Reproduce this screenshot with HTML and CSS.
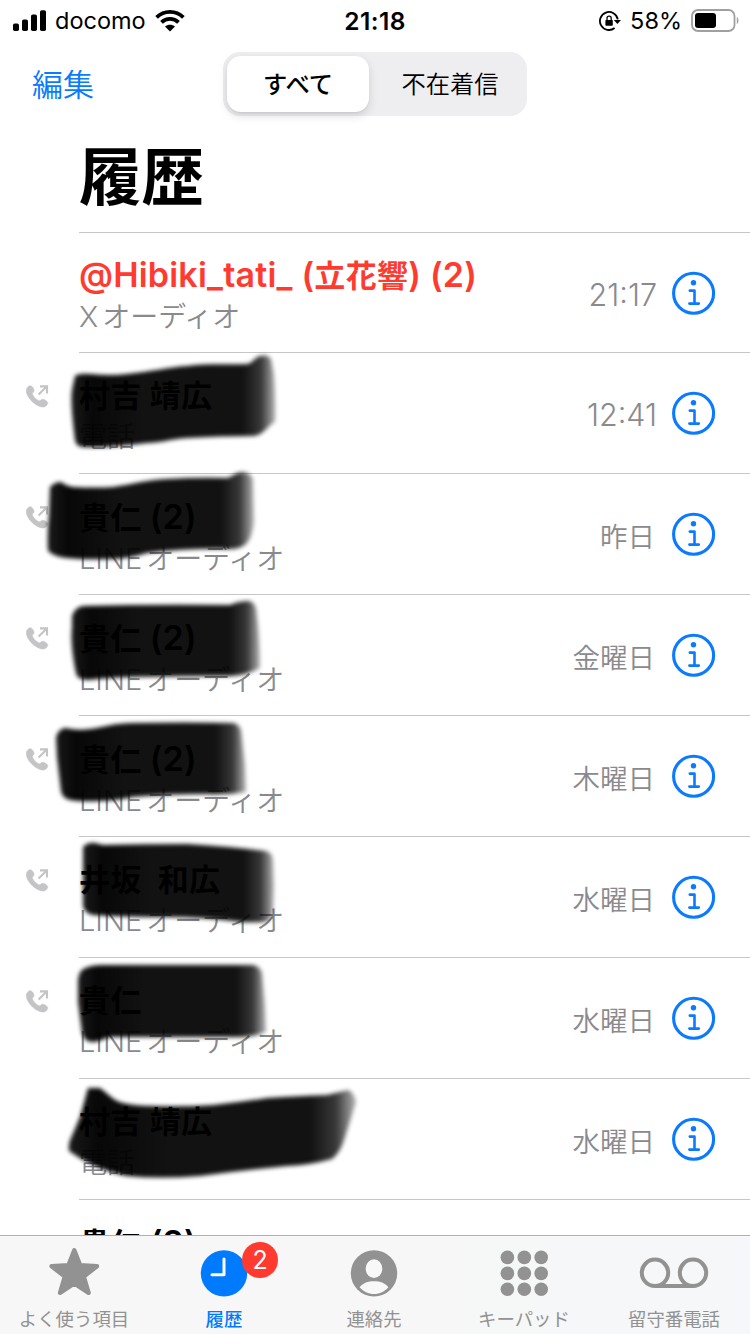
FILE: index.html
```html
<!DOCTYPE html>
<html lang="ja">

<head>
    <meta charset="UTF-8">
    <meta name="viewport" content="width=device-width, initial-scale=1.0">
    <title>履歴</title>
    <link rel="stylesheet" href="styles.css">
</head>

<body>
    <!-- shared icons and gradients -->
    <svg class="defs" width="0" height="0">
        <defs>
            <linearGradient id="ink" x1="0" y1="0" x2="1" y2="0">
                <stop offset="0" stop-color="#000" stop-opacity=".9" />
                <stop offset=".1" stop-color="#000" stop-opacity=".97" />
                <stop offset=".35" stop-color="#000" stop-opacity=".93" />
                <stop offset=".84" stop-color="#000" stop-opacity=".93" />
                <stop offset=".93" stop-color="#000" stop-opacity=".78" />
                <stop offset="1" stop-color="#000" stop-opacity=".3" />
            </linearGradient>
            <filter id="soft" x="-10%" y="-10%" width="120%" height="120%">
                <feGaussianBlur stdDeviation="2" />
            </filter>
        </defs>
        <symbol id="outgoing" viewBox="0 0 23 23">
            <path fill="#c4c4c6" stroke="#c4c4c6" stroke-width=".6" d="M2.4 1.4C4.2 0 6 .8 7.3 3.3C8.4 5.4 8.2 6.4 6.9 7.6C6 8.4 6.3 9.2 7.3 10.8C8.6 12.8 10.4 14.4 12.2 15.4C13.4 16.1 14.1 15.9 14.9 15C16 13.8 17.2 13.9 19.2 15.1C21.8 16.7 22.4 17.8 21.1 19.7C19.5 22 17.2 22.6 14 21.5C7.6 19.2 1.6 12.8.5 7.2C0 4.6.7 2.8 2.4 1.4Z" />
            <path fill="none" stroke="#c4c4c6" stroke-width="2.1" d="M12.6 9.4L20.8 1.4M14 1.4H21V8.6" />
        </symbol>
        <symbol id="info" viewBox="0 0 44 44">
            <circle cx="21.6" cy="22.2" r="20" fill="none" stroke="#0a7aff" stroke-width="3.1" />
            <circle cx="21.5" cy="11.8" r="2.7" fill="#0a7aff" />
            <path fill="none" stroke="#0a7aff" stroke-width="2.6" stroke-linecap="round" stroke-linejoin="round" d="M17.8 19.6H22.5V32.6M17.4 32.6H26.8" />
        </symbol>
    </svg>

    <div class="status-bar">
        <div class="status-left">
            <svg width="34" height="22" viewBox="0 0 34 22">
                <rect x="0" y="13.5" width="6" height="7.5" rx="1.8" />
                <rect x="9" y="9.5" width="6" height="11.5" rx="1.8" />
                <rect x="18" y="4.5" width="6" height="16.5" rx="1.8" />
                <rect x="27" y="0.3" width="6" height="20.7" rx="1.8" />
            </svg>
            <span class="carrier">docomo</span>
            <svg class="wifi" width="30" height="22" viewBox="0 0 30 22">
                <g fill="none" stroke="#000" stroke-width="3.8">
                    <path d="M1.6 7.4C9 .1 21 .1 28.4 7.4" />
                    <path d="M6.5 12.4C11.2 7.8 18.8 7.8 23.5 12.4" />
                </g>
                <path d="M15 21.5L10 16.6C12.8 14 17.2 14 20 16.6Z" />
            </svg>
        </div>
        <div class="clock">21:18</div>
        <div class="status-right">
            <svg width="22" height="22" viewBox="0 0 22 22">
                <path fill="none" stroke="#000" stroke-width="1.8" d="M15.6 18A9 9 0 1 1 18.8 9.4" />
                <path d="M14.8 10H22L18.4 14Z" />
                <rect x="6.4" y="10" width="7.4" height="5.8" rx=".8" />
                <path fill="none" stroke="#000" stroke-width="1.3" d="M8 10.4V8.2A2.1 2.1 0 0 1 12.2 8.2V10.4" />
            </svg>
            <span class="percent">58%</span>
            <svg width="48" height="24" viewBox="0 0 48 24">
                <rect x="1" y="1" width="42.5" height="21" rx="6" fill="none" stroke="#a0a0a0" stroke-width="1.8" />
                <rect x="4" y="4" width="21" height="15" rx="3" />
                <path fill="#a0a0a0" d="M45.8 8C48 9 48 14 45.8 15Z" />
            </svg>
        </div>
    </div>

    <div class="nav">
        <a class="edit">編集</a>
        <div class="segment">
            <div class="seg selected">すべて</div>
            <div class="seg">不在着信</div>
        </div>
    </div>

    <h1>履歴</h1>

    <div class="calls">
        <div class="call first">
            <div class="kind"></div>
            <div class="body">
                <div class="text">
                    <div class="name missed"><span>@Hibiki_tati_ (</span>立花響<span>) (2)</span></div>
                    <div class="via"><span>X</span>オーディオ</div>
                </div>
                <div class="time digits">21:17</div>
                <svg class="info"><use href="#info" /></svg>
            </div>
        </div>

        <div class="call">
            <div class="kind"><svg width="23" height="23"><use href="#outgoing" /></svg></div>
            <div class="body">
                <div class="text">
                    <div class="name">村吉 靖広</div>
                    <div class="via">電話</div>
                </div>
                <div class="time digits">12:41</div>
                <svg class="info"><use href="#info" /></svg>
            </div>
            <svg class="brush" viewBox="0 0 400 121">
                <path d="M75 24Q79 21 90 22Q112 24 127 22C150 20 168 15 187 14C210 11 230 13 247 12C253 11 255 5 260 4Q268 2 271 7L274 23Q276 46 275 70C268 73 263 84 253 84Q220 84 187 86C170 87 160 91 147 91Q110 96 82 95Q76 94 75 88Q70 50 72 38Z" />
            </svg>
        </div>

        <div class="call">
            <div class="kind"><svg width="23" height="23"><use href="#outgoing" /></svg></div>
            <div class="body">
                <div class="text">
                    <div class="name">貴仁 <span>(2)</span></div>
                    <div class="via"><span>LINE</span>オーディオ</div>
                </div>
                <div class="time">昨日</div>
                <svg class="info"><use href="#info" /></svg>
            </div>
            <svg class="brush" viewBox="0 0 400 121">
                <path d="M50 14Q55 9 61 9Q66 13 73 14Q95 15 113 14C133 11 146 7 167 6Q200 4 227 5C234 3 236 -1 243 -1Q251 0 253 6L254 49Q252 65 246 71Q240 76 230 76Q190 75 147 80C133 84 122 86 110 86Q85 87 67 85Q55 84 48 78Q47 60 49 42Z" />
            </svg>
        </div>

        <div class="call">
            <div class="kind"><svg width="23" height="23"><use href="#outgoing" /></svg></div>
            <div class="body">
                <div class="text">
                    <div class="name">貴仁 <span>(2)</span></div>
                    <div class="via"><span>LINE</span>オーディオ</div>
                </div>
                <div class="time">金曜日</div>
                <svg class="info"><use href="#info" /></svg>
            </div>
            <svg class="brush" viewBox="0 0 400 121">
                <path d="M72 22Q75 13 83 12Q150 10 230 11Q239 7 249 7Q254 8 256 14Q260 43 260 74Q248 81 230 82Q180 82 133 83Q105 84 88 86Q77 86 76 79Q70 50 72 33Z" />
            </svg>
        </div>

        <div class="call">
            <div class="kind"><svg width="23" height="23"><use href="#outgoing" /></svg></div>
            <div class="body">
                <div class="text">
                    <div class="name">貴仁 <span>(2)</span></div>
                    <div class="via"><span>LINE</span>オーディオ</div>
                </div>
                <div class="time">木曜日</div>
                <svg class="info"><use href="#info" /></svg>
            </div>
            <svg class="brush" viewBox="0 0 400 121">
                <path d="M56 22Q59 13 66 13Q77 16 90 14C105 12 115 8 133 8Q185 7 233 8Q239 9 241 15L245 50L246 77Q228 80 207 79Q165 79 133 82Q115 86 100 86Q80 87 70 85Q62 83 61 76L57 42Z" />
            </svg>
        </div>

        <div class="call">
            <div class="kind"><svg width="23" height="23"><use href="#outgoing" /></svg></div>
            <div class="body">
                <div class="text">
                    <div class="name">井坂&nbsp; 和広</div>
                    <div class="via"><span>LINE</span>オーディオ</div>
                </div>
                <div class="time">水曜日</div>
                <svg class="info"><use href="#info" /></svg>
            </div>
            <svg class="brush" viewBox="0 0 400 121">
                <path d="M83 11Q88 6 95 7L103 9Q145 8 187 8Q235 11 266 15Q273 17 273 25L274 50L273 77Q271 86 263 86Q245 87 233 85Q200 81 167 81Q125 81 93 79Q84 77 83 70Z" />
            </svg>
        </div>

        <div class="call">
            <div class="kind"><svg width="23" height="23"><use href="#outgoing" /></svg></div>
            <div class="body">
                <div class="text">
                    <div class="name">貴仁</div>
                    <div class="via"><span>LINE</span>オーディオ</div>
                </div>
                <div class="time">水曜日</div>
                <svg class="info"><use href="#info" /></svg>
            </div>
            <svg class="brush" viewBox="0 0 400 121">
                <path d="M78 22Q80 11 88 10Q93 8 102 8L253 8Q260 9 262 16L265 50L266 75Q254 80 240 80L112 80C103 81 100 85 93 85Q84 85 82 76L78 45Z" />
            </svg>
        </div>

        <div class="call">
            <div class="kind"></div>
            <div class="body">
                <div class="text">
                    <div class="name">村吉 靖広</div>
                    <div class="via">電話</div>
                </div>
                <div class="time">水曜日</div>
                <svg class="info"><use href="#info" /></svg>
            </div>
            <svg class="brush" viewBox="0 0 400 121">
                <path d="M88 10H100C108 16 114 23 123 25Q135 28 153 28Q185 29 213 27Q240 24 267 20Q300 18 327 17L348 12Q354 14 356 24Q351 40 345 59Q341 74 332 81Q310 87 287 88Q243 92 200 98Q160 101 127 98Q107 94 93 87Q80 81 69 73Q68 65 71 60L80 39Z" />
            </svg>
        </div>

        <div class="call">
            <div class="kind"></div>
            <div class="body">
                <div class="text">
                    <div class="name">貴仁 <span>(2)</span></div>
                </div>
            </div>
        </div>
    </div>

    <div class="tab-bar">
        <div class="tab">
            <svg width="52" height="52" viewBox="0 0 52 52">
                <path fill="#929292" stroke="#929292" stroke-width="4.4" stroke-linejoin="round" d="M26.3 4.2L32.2 19.2L49 20.2L35.8 30.6L40.6 46.8L26.3 37.4L12 46.8L16.8 30.6L3.6 20.2L20.4 19.2Z" />
            </svg>
            <span>よく使う項目</span>
        </div>
        <div class="tab active">
            <svg width="52" height="52" viewBox="0 0 52 52">
                <circle cx="26" cy="27.4" r="23.2" fill="#007aff" />
                <path fill="none" stroke="#fff" stroke-width="3" stroke-linecap="round" stroke-linejoin="round" d="M26 13V28.7H14" />
            </svg>
            <span>履歴</span>
            <div class="badge">2</div>
        </div>
        <div class="tab">
            <svg width="52" height="52" viewBox="0 0 52 52">
                <circle cx="26" cy="27.4" r="23.2" fill="#929292" />
                <ellipse cx="26" cy="22.6" rx="8.3" ry="9.4" fill="#f8f8f8" />
                <path fill="#f8f8f8" d="M11.6 41.2C15 36.8 20 35.2 26 35.2S37 36.8 40.4 41.2C36.8 45.4 31.6 48 26 48S15.2 45.4 11.6 41.2Z" />
            </svg>
            <span>連絡先</span>
        </div>
        <div class="tab">
            <svg width="52" height="52" viewBox="0 0 52 52" fill="#929292">
                <circle cx="9.4" cy="11.4" r="6.8" /><circle cx="26.3" cy="11.4" r="6.8" /><circle cx="43.2" cy="11.4" r="6.8" />
                <circle cx="9.4" cy="27.4" r="6.8" /><circle cx="26.3" cy="27.4" r="6.8" /><circle cx="43.2" cy="27.4" r="6.8" />
                <circle cx="9.4" cy="43.2" r="6.8" /><circle cx="26.3" cy="43.2" r="6.8" /><circle cx="43.2" cy="43.2" r="6.8" />
            </svg>
            <span>キーパッド</span>
        </div>
        <div class="tab">
            <svg width="70" height="52" viewBox="0 0 70 52">
                <g fill="none" stroke="#929292" stroke-width="4">
                    <circle cx="16" cy="26.8" r="13.2" />
                    <circle cx="54" cy="26.8" r="13.2" />
                    <path d="M16 40H54" />
                </g>
            </svg>
            <span>留守番電話</span>
        </div>
    </div>
</body>

</html>
```
FILE: styles.css
```css
* {
    box-sizing: border-box;
}

body {
    margin: 0;
    width: 750px;
    height: 1334px;
    display: flex;
    flex-direction: column;
    overflow: hidden;
    background-color: #fff;
    color: #000;
    font-family: Inter, 'Noto Sans CJK JP', sans-serif;
}

svg {
    display: block;
    flex: none;
}

.defs {
    position: absolute;
}

/* status bar */
.status-bar {
    height: 40px;
    flex: none;
    display: grid;
    grid-template-columns: 1fr auto 1fr;
    align-items: center;
    padding: 0 11px 0 13px;
    line-height: 42px;
}

.status-left,
.status-right {
    display: flex;
    align-items: center;
}

.status-right {
    justify-content: flex-end;
}

.carrier {
    margin-left: 8px;
    font-size: 23.5px;
}

.wifi {
    margin-left: 9px;
}

.clock {
    margin-left: -2px;
    font-size: 24.5px;
    font-weight: 600;
    letter-spacing: 0.4px;
}

.percent {
    margin: 0 9px 0 9px;
    font-size: 23.5px;
}

/* edit button and filter */
.nav {
    height: 88px;
    flex: none;
    display: grid;
    grid-template-columns: 1fr 304px 1fr;
    padding: 12px 0 0 32px;
}

.nav::after {
    content: '';
    margin-right: 32px;
}

.edit {
    color: #0a7aff;
    font-size: 31px;
    line-height: 65px;
    font-weight: 350;
}

.segment {
    display: flex;
    height: 64px;
    padding: 4px;
    margin-left: -16px;
    margin-right: 16px;
    border-radius: 17px;
    background-color: #eeeef0;
}

.seg {
    flex: 1;
    padding-left: 8px;
    text-align: center;
    font-size: 24.3px;
    line-height: 57px;
    font-weight: 350;
}

.seg.selected {
    flex: 0 0 142px;
    padding-left: 0;
    height: 56px;
    border-radius: 14px;
    background-color: #fff;
    font-weight: 500;
    box-shadow: 0 4px 10px rgba(0, 0, 0, 0.13), 0 1px 2px rgba(0, 0, 0, 0.06);
}

h1 {
    margin: 0 0 0 79px;
    height: 104px;
    flex: none;
    font-size: 62.5px;
    line-height: 98px;
    font-weight: 700;
}

/* call list */
.calls {
    flex: 1;
    min-height: 0;
    overflow: hidden;
}

.call {
    position: relative;
    display: flex;
    height: 121px;
}

.call.first {
    height: 120px;
}

.kind {
    width: 79px;
    padding: 33px 0 0 26px;
}

.body {
    flex: 1;
    display: flex;
    padding-right: 34px;
    border-top: 1px solid #c6c6c8;
}

.text {
    flex: 1;
    padding-top: 22px;
}

.name {
    font-size: 31px;
    line-height: 41px;
    font-weight: 600;
    letter-spacing: 0.3px;
    white-space: pre;
}

.name span {
    font-size: 34px;
    letter-spacing: 0.2px;
}

.missed {
    color: #ff3b30;
}

.call.first .text {
    padding-top: 21px;
}

.via {
    display: flex;
    gap: 4px;
    color: #8a8a8e;
    font-size: 28px;
    line-height: 42px;
    font-weight: 350;
}

.via span {
    font-size: 29px;
}

.time {
    padding-right: 17px;
    color: #8a8a8e;
    font-size: 27.5px;
    line-height: 126px;
    font-weight: 350;
}

.time.digits {
    padding-right: 15px;
    font-size: 30.5px;
    line-height: 124px;
}

.info {
    width: 44px;
    height: 44px;
    margin-top: 38px;
}

/* marker strokes lie over the row text */
.brush {
    position: absolute;
    left: 0;
    top: 0;
    width: 400px;
    height: 121px;
    overflow: visible;
}

.brush path {
    fill: url(#ink);
    filter: url(#soft);
}

/* tab bar */
.tab-bar {
    position: relative;
    height: 99px;
    flex: none;
    display: flex;
    margin-left: -1px;
    border-top: 1px solid #b0b0b0;
    background: linear-gradient(90deg, #f7f7f7 60%, #f5f7fa);
}

.tab {
    position: relative;
    width: 150px;
    display: flex;
    flex-direction: column;
    align-items: center;
    padding-top: 10px;
    color: #929292;
    font-size: 18.4px;
    line-height: 28px;
}

.tab span {
    margin-top: 7px;
}

.tab.active {
    color: #007aff;
    font-weight: 500;
}

.badge {
    position: absolute;
    left: 93px;
    top: 6px;
    width: 36px;
    height: 36px;
    border-radius: 50%;
    background-color: #ff3b30;
    color: #fff;
    font-size: 25px;
    font-weight: 400;
    line-height: 36px;
    text-align: center;
}
```
